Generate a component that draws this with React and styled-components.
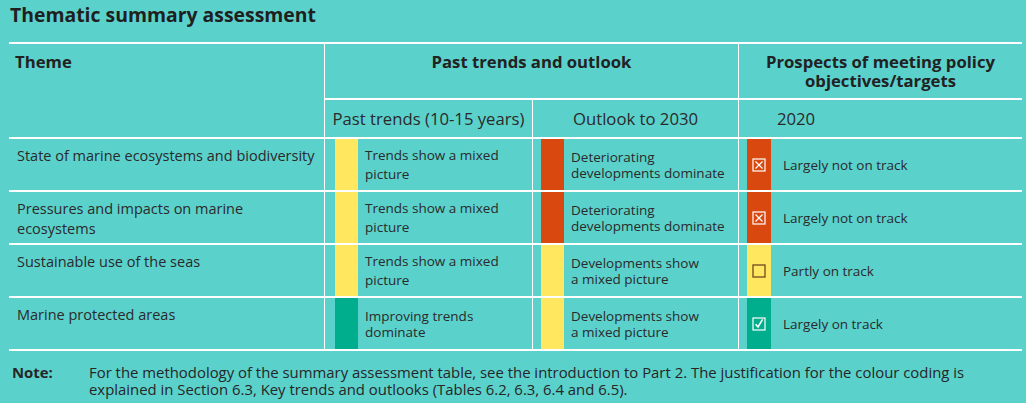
import React from 'react'
import styled, { createGlobalStyle } from 'styled-components'

const GlobalStyle = createGlobalStyle`
  html, body {
    margin: 0;
    padding: 0;
    background: #5bd1cc;
  }
  body {
    font-family: "Open Sans", "Liberation Sans", sans-serif;
    color: #262626;
  }
`

const colors = {
  yellow: '#ffe760',
  red: '#d9480f',
  green: '#00ad8c',
}

const Page = styled.div`
  width: 1026px;
  height: 403px;
  box-sizing: border-box;
  padding: 0 4px 0 9px;
  background: #5bd1cc;
  overflow: hidden;
`

const Title = styled.h1`
  margin: 0 0 12px 1px;
  font-size: 19.4px;
  font-weight: 700;
  line-height: 30px;
  color: #1f1f1f;
`

const Table = styled.div`
  display: grid;
  grid-template-columns: 315px 207px 205px 283px;
  grid-template-rows: 54px 37px repeat(4, 51px);
  column-gap: 1px;
  row-gap: 2px;
  padding: 2px 0;
  background: #ffffff;
`

const Cell = styled.div`
  background: #5bd1cc;
  min-width: 0;
`

const HeadCell = styled(Cell)`
  grid-column: ${({ $col }) => $col};
  grid-row: ${({ $row }) => $row};
  padding: 8px ${({ $pad }) => $pad || '6px'};
  font-size: 16.7px;
  font-weight: 700;
  line-height: 19px;
  text-align: ${({ $align }) => $align || 'center'};
  color: #222;
`

const SubCell = styled(Cell)`
  display: flex;
  align-items: center;
  justify-content: ${({ $left }) => ($left ? 'flex-start' : 'center')};
  padding-left: ${({ $left }) => ($left ? '38px' : '0')};
  font-size: 16.7px;
  color: #2a2a2a;
`

const ThemeCell = styled(Cell)`
  padding: 7px 2px 7px 8px;
  font-size: 14.5px;
  line-height: 20px;
  color: #2a2a2a;
`

const TrendCell = styled(Cell)`
  display: flex;
  align-items: stretch;
  padding-left: ${({ $offset }) => $offset}px;
`

const Bar = styled.div`
  flex: 0 0 ${({ $w }) => $w || 23}px;
  background: ${({ $color }) => colors[$color]};
  display: flex;
  align-items: center;
  justify-content: center;
`

const TrendText = styled.div`
  display: flex;
  align-items: center;
  padding-left: ${({ $gap }) => $gap || 7}px;
  font-size: 13.5px;
  line-height: ${({ $lh }) => $lh || 16}px;
  color: #2a2a2a;
`

const Note = styled.div`
  display: grid;
  grid-template-columns: 77px 1fr;
  margin-top: 13px;
  padding-left: 3px;
  font-size: 14.9px;
  line-height: 17px;
  color: #262626;
`

const NoteLabel = styled.span`
  font-weight: 700;
`

function StatusIcon({ kind }) {
  if (kind === 'partly') {
    return (
      <svg width="14" height="14" viewBox="0 0 14 14">
        <rect x="1" y="1" width="12" height="12" fill="none" stroke="#6a4a20" strokeWidth="1.3" />
      </svg>
    )
  }
  if (kind === 'on') {
    return (
      <svg width="14" height="14" viewBox="0 0 14 14">
        <rect x="1" y="1" width="12" height="12" fill="none" stroke="#fff" strokeWidth="1.2" />
        <path d="M3.6 7.2 L6 10 L10.6 2.4" fill="none" stroke="#fff" strokeWidth="1.6" />
      </svg>
    )
  }
  return (
    <svg width="14" height="14" viewBox="0 0 14 14">
      <rect x="1" y="1" width="12" height="12" fill="none" stroke="#fff" strokeWidth="1.2" />
      <path d="M3.5 3.5 L10.5 10.5 M10.5 3.5 L3.5 10.5" stroke="#fff" strokeWidth="1.2" />
    </svg>
  )
}

const rows = [
  {
    theme: 'State of marine ecosystems and biodiversity',
    past: ['yellow', 'Trends show a mixed', 'picture', 19],
    outlook: ['red', 'Deteriorating', 'developments dominate', 16],
    prospect: ['red', 'not', 'Largely not on track'],
  },
  {
    theme: 'Pressures and impacts on marine ecosystems',
    past: ['yellow', 'Trends show a mixed', 'picture', 19],
    outlook: ['red', 'Deteriorating', 'developments dominate', 16],
    prospect: ['red', 'not', 'Largely not on track'],
  },
  {
    theme: 'Sustainable use of the seas',
    past: ['yellow', 'Trends show a mixed', 'picture', 19],
    outlook: ['yellow', 'Developments show', 'a mixed picture', 16],
    prospect: ['yellow', 'partly', 'Partly on track'],
  },
  {
    theme: 'Marine protected areas',
    past: ['green', 'Improving trends', 'dominate', 16],
    outlook: ['yellow', 'Developments show', 'a mixed picture', 16],
    prospect: ['green', 'on', 'Largely on track'],
  },
]

function Trend({ data, offset }) {
  const [color, l1, l2, lh] = data
  return (
    <TrendCell $offset={offset}>
      <Bar $color={color} />
      <TrendText $lh={lh}>
        {l1}
        <br />
        {l2}
      </TrendText>
    </TrendCell>
  )
}

export default function App() {
  return (
    <>
      <GlobalStyle />
      <Page>
        <Title>Thematic summary assessment</Title>
        <Table>
          <HeadCell $col="1" $row="1 / 3" $align="left">Theme</HeadCell>
          <HeadCell $col="2 / 4" $row="1">Past trends and outlook</HeadCell>
          <HeadCell $col="4" $row="1">
            Prospects of meeting policy
            <br />
            objectives/targets
          </HeadCell>
          <SubCell>Past trends (10-15 years)</SubCell>
          <SubCell>Outlook to 2030</SubCell>
          <SubCell $left>2020</SubCell>

          {rows.map((r) => (
            <React.Fragment key={r.theme}>
              <ThemeCell>{r.theme}</ThemeCell>
              <Trend data={r.past} offset={10} />
              <Trend data={r.outlook} offset={8} />
              <TrendCell $offset={8}>
                <Bar $color={r.prospect[0]} $w={24}>
                  <StatusIcon kind={r.prospect[1]} />
                </Bar>
                <TrendText $gap={12}>{r.prospect[2]}</TrendText>
              </TrendCell>
            </React.Fragment>
          ))}
        </Table>
        <Note>
          <NoteLabel>Note:</NoteLabel>
          <span>
            For the methodology of the summary assessment table, see the introduction to Part 2. The justification for the colour coding is
            <br />
            explained in Section 6.3, Key trends and outlooks (Tables 6.2, 6.3, 6.4 and 6.5).
          </span>
        </Note>
      </Page>
    </>
  )
}
